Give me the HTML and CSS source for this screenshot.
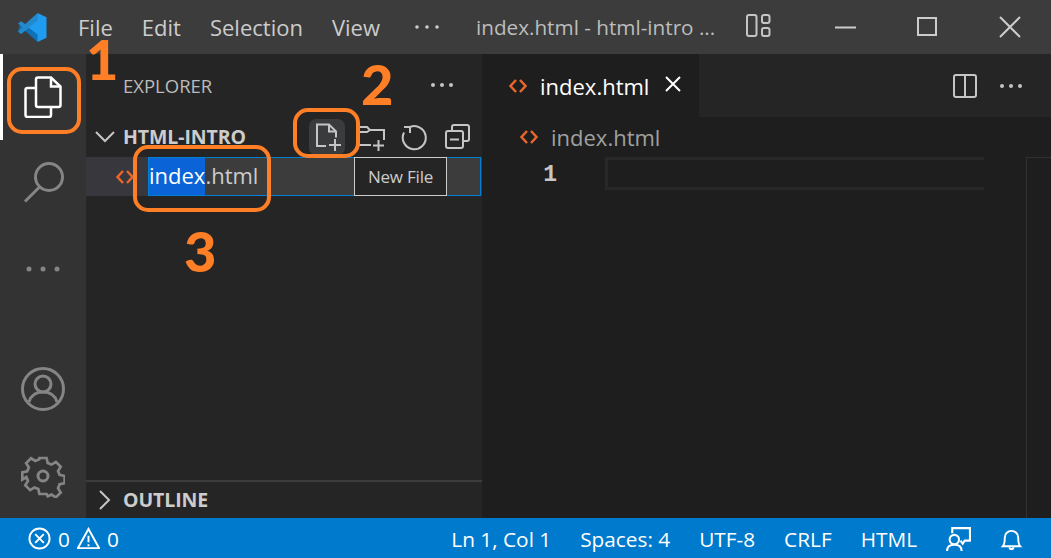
FILE: index.html
```html
<!DOCTYPE html>
<html lang="en">
<head>
<meta charset="utf-8">
<title>index.html - html-intro</title>
<link rel="stylesheet" href="styles.css">
</head>
<body>
<div class="app">
  <header class="titlebar">
    <svg class="logo" viewBox="0 0 29 29"><path fill="#0f70b5" d="M0 18.500 3 21 7 17.800 19.500 29 21 22 7.500 11 3 8.500Z"/><path fill="#2489ca" d="M0 10.500 3 8.200 7 11.300 19.500 0 21 7 7 18 3 21 0 18.500 4.500 14.500Z"/><path fill="#1f9cf0" d="M19.500 0 28.500 4.200V24.800L19.500 29V21.500L10.500 14.500 19.500 7.500Z"/></svg>
    <nav class="menu">
      <span class="menu-item">File</span>
      <span class="menu-item">Edit</span>
      <span class="menu-item">Selection</span>
      <span class="menu-item">View</span>
    </nav>
    <svg class="menu-more" viewBox="0 0 24 4"><circle cx="2" cy="2" r="1.800"/><circle cx="12" cy="2" r="1.800"/><circle cx="22" cy="2" r="1.800"/></svg>
    <div class="window-title">index.html - html-intro ...</div>
    <svg class="layout-icon" viewBox="0 0 25 23"><rect x="1" y="1" width="9.500" height="21" rx="2"/><rect x="16" y="1" width="7.500" height="8" rx="2"/><rect x="16" y="14" width="7.500" height="8" rx="2"/></svg>
    <div class="window-controls">
      <svg viewBox="0 0 22 22"><path d="M0 11.500H21"/></svg>
      <svg viewBox="0 0 22 22"><rect x="1" y="2" width="18" height="17"/></svg>
      <svg viewBox="0 0 22 22"><path d="M1 1 21 21M21 1 1 21"/></svg>
    </div>
  </header>

  <div class="workbench">
    <aside class="activity">
      <div class="activity-top">
        <div class="activity-btn is-active">
          <svg class="act-files" viewBox="0 0 38 42"><path d="M14 1.500h13l9.500 9V29a2 2 0 0 1-2 2H14a2 2 0 0 1-2-2V3.500a2 2 0 0 1 2-2Z"/><path d="M27 1.500v9h9.500"/><path d="M12 12H3.500a2 2 0 0 0-2 2v25a2 2 0 0 0 2 2H25a2 2 0 0 0 2-2v-8"/></svg>
        </div>
        <div class="activity-btn">
          <svg class="act-icon" viewBox="0 0 44 44"><circle cx="28" cy="16" r="13.500"/><path d="M18.500 26 4 40.500"/></svg>
        </div>
        <div class="activity-btn activity-dots">
          <svg class="act-icon" viewBox="0 0 44 44"><circle cx="8" cy="22" r="2.500" class="filled"/><circle cx="22" cy="22" r="2.500" class="filled"/><circle cx="36" cy="22" r="2.500" class="filled"/></svg>
        </div>
      </div>
      <div class="activity-bottom">
        <div class="activity-btn">
          <svg class="act-icon" viewBox="0 0 44 44"><circle cx="22" cy="22" r="20.500"/><circle cx="22" cy="17" r="8"/><path d="M8 35c2-7 7-10 14-10s12 3 14 10"/></svg>
        </div>
        <div class="activity-btn">
          <svg class="act-icon" viewBox="0 0 44 44"><path d="M18 2h8l1.200 5.500 4.300 1.800 4.800-3 5.400 5.400-3 4.800 1.800 4.300 5.500 1.200v8l-5.500 1.200-1.800 4.300 3 4.800-5.400 5.400-4.800-3-4.300 1.800L26 42h-8l-1.200-5.500-4.300-1.800-4.800 3-5.400-5.400 3-4.800-1.800-4.300L-1 26v-8l5.500-1.200 1.800-4.300-3-4.800 5.400-5.400 4.800 3 4.300-1.800Z" transform="translate(2.200 2.200) scale(.9)"/><circle cx="22" cy="22" r="5"/></svg>
        </div>
      </div>
    </aside>

    <section class="sidebar">
      <div class="side-head">
        <span class="side-title">EXPLORER</span>
        <span class="side-more">
          <svg class="dots" viewBox="0 0 24 6"><circle cx="3" cy="3" r="2"/><circle cx="12" cy="3" r="2"/><circle cx="21" cy="3" r="2"/></svg>
        </span>
      </div>
      <div class="folder-row">
        <svg class="chev" viewBox="0 0 20 12"><path d="M1 1l9 9 9-9"/></svg>
        <span class="folder-name">HTML-INTRO</span>
        <div class="folder-actions">
          <span class="action is-hover">
            <svg viewBox="0 0 28 28"><path d="M13 23H4V1.500h12l7 7v6"/><path d="M16 1.500v7h7"/><path d="M22 16v12M16 22h12"/></svg>
          </span>
          <span class="action">
            <svg viewBox="0 0 28 28"><path d="M14 22H2V4h8l3 3h14v10"/><path d="M2 9h8l3-2"/><path d="M21.500 17v11M16 22.500h11"/></svg>
          </span>
          <span class="action">
            <svg viewBox="1 0 28 28"><path d="M10 4a11.500 11.500 0 1 1-6 5.500"/><path d="M10 10V4H4"/></svg>
          </span>
          <span class="action">
            <svg viewBox="2 0 28 28"><path d="M9 8V4a2 2 0 0 1 2-2h13a2 2 0 0 1 2 2v12a2 2 0 0 1-2 2h-4"/><rect x="3" y="8" width="17" height="17" rx="2"/><path d="M7 16.500h9"/></svg>
          </span>
        </div>
      </div>
      <div class="file-row">
        <svg class="code-icon" viewBox="0 0 18 14"><path d="M7 1 1.500 7 7 13M11 1l5.500 6L11 13"/></svg>
        <div class="rename-input"><span class="selected">index</span>.html</div>
        <div class="tooltip">New File</div>
      </div>
      <div class="outline-row">
        <svg class="chev-right" viewBox="0 0 12 20"><path d="M1 1l9 9-9 9"/></svg>
        <span class="folder-name">OUTLINE</span>
      </div>
    </section>

    <main class="editor">
      <div class="tabs">
        <div class="tab">
          <svg class="code-icon" viewBox="0 0 18 14"><path d="M7 1 1.500 7 7 13M11 1l5.500 6L11 13"/></svg>
          <span class="tab-name">index.html</span>
          <svg class="tab-close" viewBox="0 0 18 18"><path d="M2 2l14 14M16 2 2 16"/></svg>
        </div>
        <div class="tab-actions">
          <svg class="split" viewBox="0 0 24 24"><rect x="1" y="1" width="22" height="22" rx="2"/><path d="M12 1v22"/></svg>
          <svg class="dots" viewBox="0 0 24 6"><circle cx="3" cy="3" r="2"/><circle cx="12" cy="3" r="2"/><circle cx="21" cy="3" r="2"/></svg>
        </div>
      </div>
      <div class="breadcrumb">
        <svg class="code-icon" viewBox="0 0 18 14"><path d="M7 1 1.500 7 7 13M11 1l5.500 6L11 13"/></svg>
        <span>index.html</span>
      </div>
      <div class="code">
        <span class="line-number">1</span>
        <div class="current-line"></div>
        <div class="minimap"></div>
      </div>
    </main>
  </div>

  <footer class="statusbar">
    <div class="status-left">
      <svg class="st-icon" viewBox="0 0 24 24"><circle cx="12" cy="12" r="10.500"/><path d="M7.500 7.500l9 9M16.500 7.500l-9 9"/></svg>
      <span>0</span>
      <svg class="st-icon" viewBox="0 0 24 24"><path d="M12 2 23 22H1Z"/><path d="M12 9v7M12 18v2"/></svg>
      <span>0</span>
    </div>
    <div class="status-right">
      <span>Ln 1, Col 1</span>
      <span>Spaces: 4</span>
      <span>UTF-8</span>
      <span>CRLF</span>
      <span>HTML</span>
      <svg class="st-icon st-feedback" viewBox="0 0 24 24"><path d="M6 7V2h17v12h-5l-2 3-2-3"/><circle cx="8" cy="13" r="4.500"/><path d="M1 24c0-4 3-6 7-6s7 2 7 6"/></svg>
      <svg class="st-icon" viewBox="0 0 24 24"><path d="M3 20c2-2 2-4 2-9a7 7 0 0 1 14 0c0 5 0 7 2 9Z"/><path d="M10 21a2 2 0 0 0 4 0"/></svg>
    </div>
  </footer>

  <div class="mark mark-1"></div>
  <div class="mark mark-2"></div>
  <div class="mark mark-3"></div>
  <span class="num num-1">1</span>
  <span class="num num-2">2</span>
  <span class="num num-3">3</span>
</div>
</body>
</html>
```

FILE: styles.css
```css
* { box-sizing: border-box; }
html, body { margin: 0; height: 100%; background: #1e1e1e; }
body { font-family: "Open Sans", "Noto Sans", sans-serif; overflow: hidden; }
svg { display: block; fill: none; }

.app { position: relative; width: 1051px; height: 558px; display: flex; flex-direction: column; }

.titlebar { height: 54px; flex: none; background: #3c3c3c; display: flex; align-items: center; color: #cccccc; padding-left: 18px; }
.logo { width: 29px; height: 29px; flex: none; }
.menu { display: flex; margin-left: 31px; gap: 29px; font-size: 22px; }
.menu-item { white-space: nowrap; }
.menu-more { width: 24px; height: 4px; fill: #cccccc; margin-left: 35px; flex: none; }
.window-title { margin-left: 37px; font-size: 20.700px; color: #bdbdbd; white-space: nowrap; width: 270px; }
.layout-icon { width: 25px; height: 23px; stroke: #c5c5c5; stroke-width: 2; flex: none; margin-top: -3px; }
.window-controls { margin-left: auto; display: flex; gap: 60px; padding-right: 30px; }
.window-controls svg { width: 22px; height: 22px; stroke: #cccccc; stroke-width: 2; }

.workbench { flex: 1; display: flex; min-height: 0; }

.activity { width: 86px; flex: none; background: #333333; display: flex; flex-direction: column; justify-content: space-between; }
.activity-top { display: flex; flex-direction: column; }
.activity-bottom { display: flex; flex-direction: column; padding-bottom: 20px; gap: 43px; }
.activity-btn { height: 86px; display: flex; align-items: center; justify-content: center; }
.activity-bottom .activity-btn { height: 44px; }
.activity-btn.is-active { border-left: 3px solid #ffffff; padding-right: 3px; }
.act-files { width: 38px; height: 42px; stroke: #ffffff; stroke-width: 2.500; }
.act-icon { width: 44px; height: 44px; stroke: #858585; stroke-width: 3; }
.act-icon .filled { fill: #858585; stroke: none; }

.sidebar { width: 396px; flex: none; background: #252526; display: flex; flex-direction: column; position: relative; }
.side-head { height: 63px; flex: none; display: flex; align-items: center; justify-content: space-between; padding: 0 28px 2px 37px; }
.side-title { font-size: 18.500px; color: #bbbbbb; margin-top: 1px; }
.dots { width: 24px; height: 6px; fill: #c5c5c5; }

.folder-row { height: 40px; flex: none; display: flex; align-items: center; color: #cccccc; padding-left: 9px; }
.chev { width: 20px; height: 12px; stroke: #c5c5c5; stroke-width: 2; flex: none; }
.folder-name { font-size: 19.500px; font-weight: 700; letter-spacing: -0.1px; color: #cccccc; line-height: 26px; margin-top: -1px; }
.folder-row .folder-name { margin-left: 8px; }
.folder-actions { margin-left: auto; display: flex; gap: 8px; padding-right: 5px; align-items: center; }
.action { width: 36px; height: 36px; display: flex; align-items: center; justify-content: center; border-radius: 7px; }
.action.is-hover { background: #3a3b3c; }
.action svg { width: 28px; height: 28px; stroke: #c5c5c5; stroke-width: 2; }

.file-row { position: relative; height: 39px; flex: none; background: #37373d; display: flex; align-items: center; padding-left: 30px; }
.code-icon { width: 18px; height: 14px; stroke: #e8662b; stroke-width: 2.500; flex: none; }
.rename-input { width: 333px; height: 39px; margin-left: 14px; background: #3c3c3c; border: 1px solid #007fd4; font-size: 22px; line-height: 35px; color: #cccccc; white-space: nowrap; }
.selected { background: #0a64d8; color: #ffffff; display: inline-block; height: 37px; line-height: 35px; }
.tooltip { position: absolute; left: 268px; top: 0; width: 93px; height: 39px; background: #252526; border: 1px solid #cccccc; color: #cccccc; font-size: 17px; letter-spacing: -0.2px; display: flex; align-items: center; justify-content: center; }

.outline-row { margin-top: auto; height: 38px; flex: none; border-top: 2px solid #3c3c3c; display: flex; align-items: center; padding-left: 13px; }
.chev-right { width: 12px; height: 20px; stroke: #c5c5c5; stroke-width: 2; flex: none; }
.outline-row .folder-name { margin-left: 12px; }

.editor { flex: 1; min-width: 0; background: #1e1e1e; display: flex; flex-direction: column; }
.tabs { height: 63px; flex: none; background: #252526; display: flex; justify-content: space-between; align-items: center; padding-right: 28px; }
.tab { width: 217px; height: 63px; background: #1e1e1e; display: flex; align-items: center; padding-left: 27px; color: #ffffff; }
.tab-name { margin-left: 13px; font-size: 22px; white-space: nowrap; }
.tab-close { width: 18px; height: 18px; stroke: #ffffff; stroke-width: 2; margin-left: 15px; margin-top: -3px; flex: none; }
.tab-actions { display: flex; align-items: center; gap: 22px; }
.split { width: 24px; height: 24px; stroke: #c5c5c5; stroke-width: 2; }

.breadcrumb { height: 40px; flex: none; display: flex; align-items: center; padding-left: 38px; color: #a0a0a0; font-size: 22px; padding-bottom: 1px; }
.breadcrumb span { margin-left: 13px; }

.code { flex: 1; position: relative; display: flex; align-items: flex-start; }
.line-number { width: 75px; text-align: right; color: #c6c6c6; font-family: "Liberation Mono", monospace; font-size: 23px; line-height: 37px; font-weight: 700; flex: none; }
.current-line { width: 379px; height: 33px; margin-left: 48px; border: 3px solid #282828; border-right: 0; flex: none; }
.minimap { margin-left: auto; width: 25px; height: 100%; border-left: 1px solid #303030; border-top: 1px solid #303030; }

.statusbar { height: 40px; flex: none; background: #007acc; color: #ffffff; display: flex; justify-content: space-between; align-items: center; font-size: 20.800px; padding: 2px 28px 0 28px; }
.status-left, .status-right { display: flex; align-items: center; white-space: nowrap; }
.status-left { gap: 7px; }
.status-right { gap: 29px; }
.st-icon { width: 23px; height: 23px; stroke: #ffffff; stroke-width: 2; flex: none; margin-top: -2px; }
.st-feedback { width: 25px; height: 25px; }

.mark { position: absolute; border: 4px solid #ff7f27; border-radius: 15px; }
.mark-1 { left: 7px; top: 67px; width: 74px; height: 67px; }
.mark-2 { left: 293px; top: 108px; width: 67px; height: 50px; }
.mark-3 { left: 133px; top: 145px; width: 138px; height: 67px; }
.num { position: absolute; color: #ff7f27; font-weight: 900; font-size: 56px; line-height: 1; font-family: "Lato", sans-serif; }
.num-1 { left: 86px; top: 31px; }
.num-2 { left: 361px; top: 56px; }
.num-3 { left: 184px; top: 223px; }
```
